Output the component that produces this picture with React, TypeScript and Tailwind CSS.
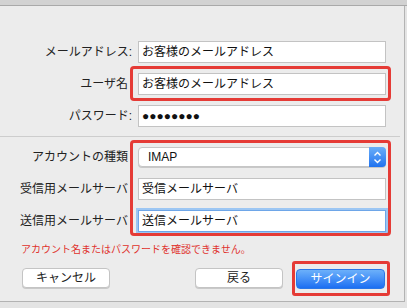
import React from 'react';

const font = { fontFamily: '"Liberation Sans", "Noto Sans CJK JP", sans-serif' };

function Label({ text, colon }: { text: string; colon?: boolean }) {
  return (
    <div
      className={
        colon
          ? 'w-[138px] shrink-0 pr-[6px] text-right text-[12px] text-[#222]'
          : 'w-[138px] shrink-0 pr-[10px] text-right text-[12px] text-[#222]'
      }
    >
      {text}
    </div>
  );
}

function Field({ value, focused }: { value: string; focused?: boolean }) {
  return (
    <div
      className={
        focused
          ? 'flex h-[22px] w-[248px] items-center border border-[#6ea6e8] bg-white pl-[3px] text-[12px] text-[#111] shadow-[0_0_0_2px_#9cc6f3]'
          : 'flex h-[22px] w-[248px] items-center border border-[#c3c3c3] bg-white pl-[3px] text-[12px] text-[#111]'
      }
    >
      {value}
    </div>
  );
}

export default function App() {
  return (
    <div className="h-[308px] w-[407px] bg-[#e4e4e4]" style={font}>
      <div className="h-[6px] border-b border-[#a9a9a9] bg-[#d2d2d2]" />
      <div className="relative h-[296px] w-[405px] border-r border-b border-[#b3b3b3] bg-[#ececec] pt-[35px]">
        <div className="flex items-center">
          <Label text="メールアドレス:" colon />
          <Field value="お客様のメールアドレス" />
        </div>
        <div className="mt-[10px] flex items-center">
          <Label text="ユーザ名" />
          <div className="relative">
            <Field value="お客様のメールアドレス" />
            <div className="absolute -top-[7px] -bottom-[6px] -left-[8px] -right-[5px] rounded-[4px] border-[3px] border-[#e53b36]" />
          </div>
        </div>
        <div className="mt-[10px] flex items-center">
          <Label text="パスワード:" colon />
          <Field value="●●●●●●●●" />
        </div>

        <div className="mt-[9px] h-px w-[400px] bg-[#cdcdcd]" />

        <div className="relative mt-[10px]">
          <div className="flex items-center">
            <Label text="アカウントの種類" />
            <div className="flex h-[20px] w-[248px] items-center rounded-[4px] border border-[#c6c6c6] bg-white text-[12px] text-[#111] shadow-[0_1px_0_#c8c8c8]">
              <span className="flex-1 pl-[9px]">IMAP</span>
              <div className="flex h-[20px] w-[17px] -mr-px items-center justify-center rounded-r-[4px] bg-gradient-to-b from-[#6aaef8] to-[#1f72ef]">
                <svg width="9" height="13" viewBox="0 0 9 13" fill="none" stroke="white" strokeWidth="1.4">
                  <path d="M1.5 4.5 L4.5 1.5 L7.5 4.5" />
                  <path d="M1.5 8.5 L4.5 11.5 L7.5 8.5" />
                </svg>
              </div>
            </div>
          </div>
          <div className="mt-[11px] flex items-center">
            <Label text="受信用メールサーバ" />
            <Field value="受信メールサーバ" />
          </div>
          <div className="mt-[10px] flex items-center">
            <Label text="送信用メールサーバ" />
            <Field value="送信メールサーバ" focused />
          </div>
          <div className="absolute -top-[7px] -bottom-[4px] left-[130px] w-[261px] rounded-[4px] border-[3px] border-[#e53b36]" />
        </div>

        <div className="mt-[11px] h-[14px] pl-[21px] text-[10px] leading-[14px] text-[#e0322d]">
          アカウント名またはパスワードを確認できません。
        </div>

        <div className="mt-[9px] flex items-center pl-[22px]">
          <button className="h-[20px] w-[88px] rounded-[4px] border border-[#c4c4c4] bg-white text-[12px] text-[#222] shadow-[0_1px_0_#c9c9c9]">
            キャンセル
          </button>
          <button className="ml-[85px] h-[20px] w-[88px] rounded-[4px] border border-[#c4c4c4] bg-white text-[12px] text-[#222] shadow-[0_1px_0_#c9c9c9]">
            戻る
          </button>
          <div className="relative ml-[13px]">
            <button className="h-[20px] w-[89px] rounded-[4px] border border-[#2a77e8] bg-gradient-to-b from-[#6cb0fa] to-[#1b6ef2] text-[12px] text-white">
              サインイン
            </button>
            <div className="absolute -top-[5px] -bottom-[6px] -left-[4px] -right-[5px] rounded-[3px] border-[3px] border-[#e53b36]" />
          </div>
        </div>
      </div>
    </div>
  );
}
